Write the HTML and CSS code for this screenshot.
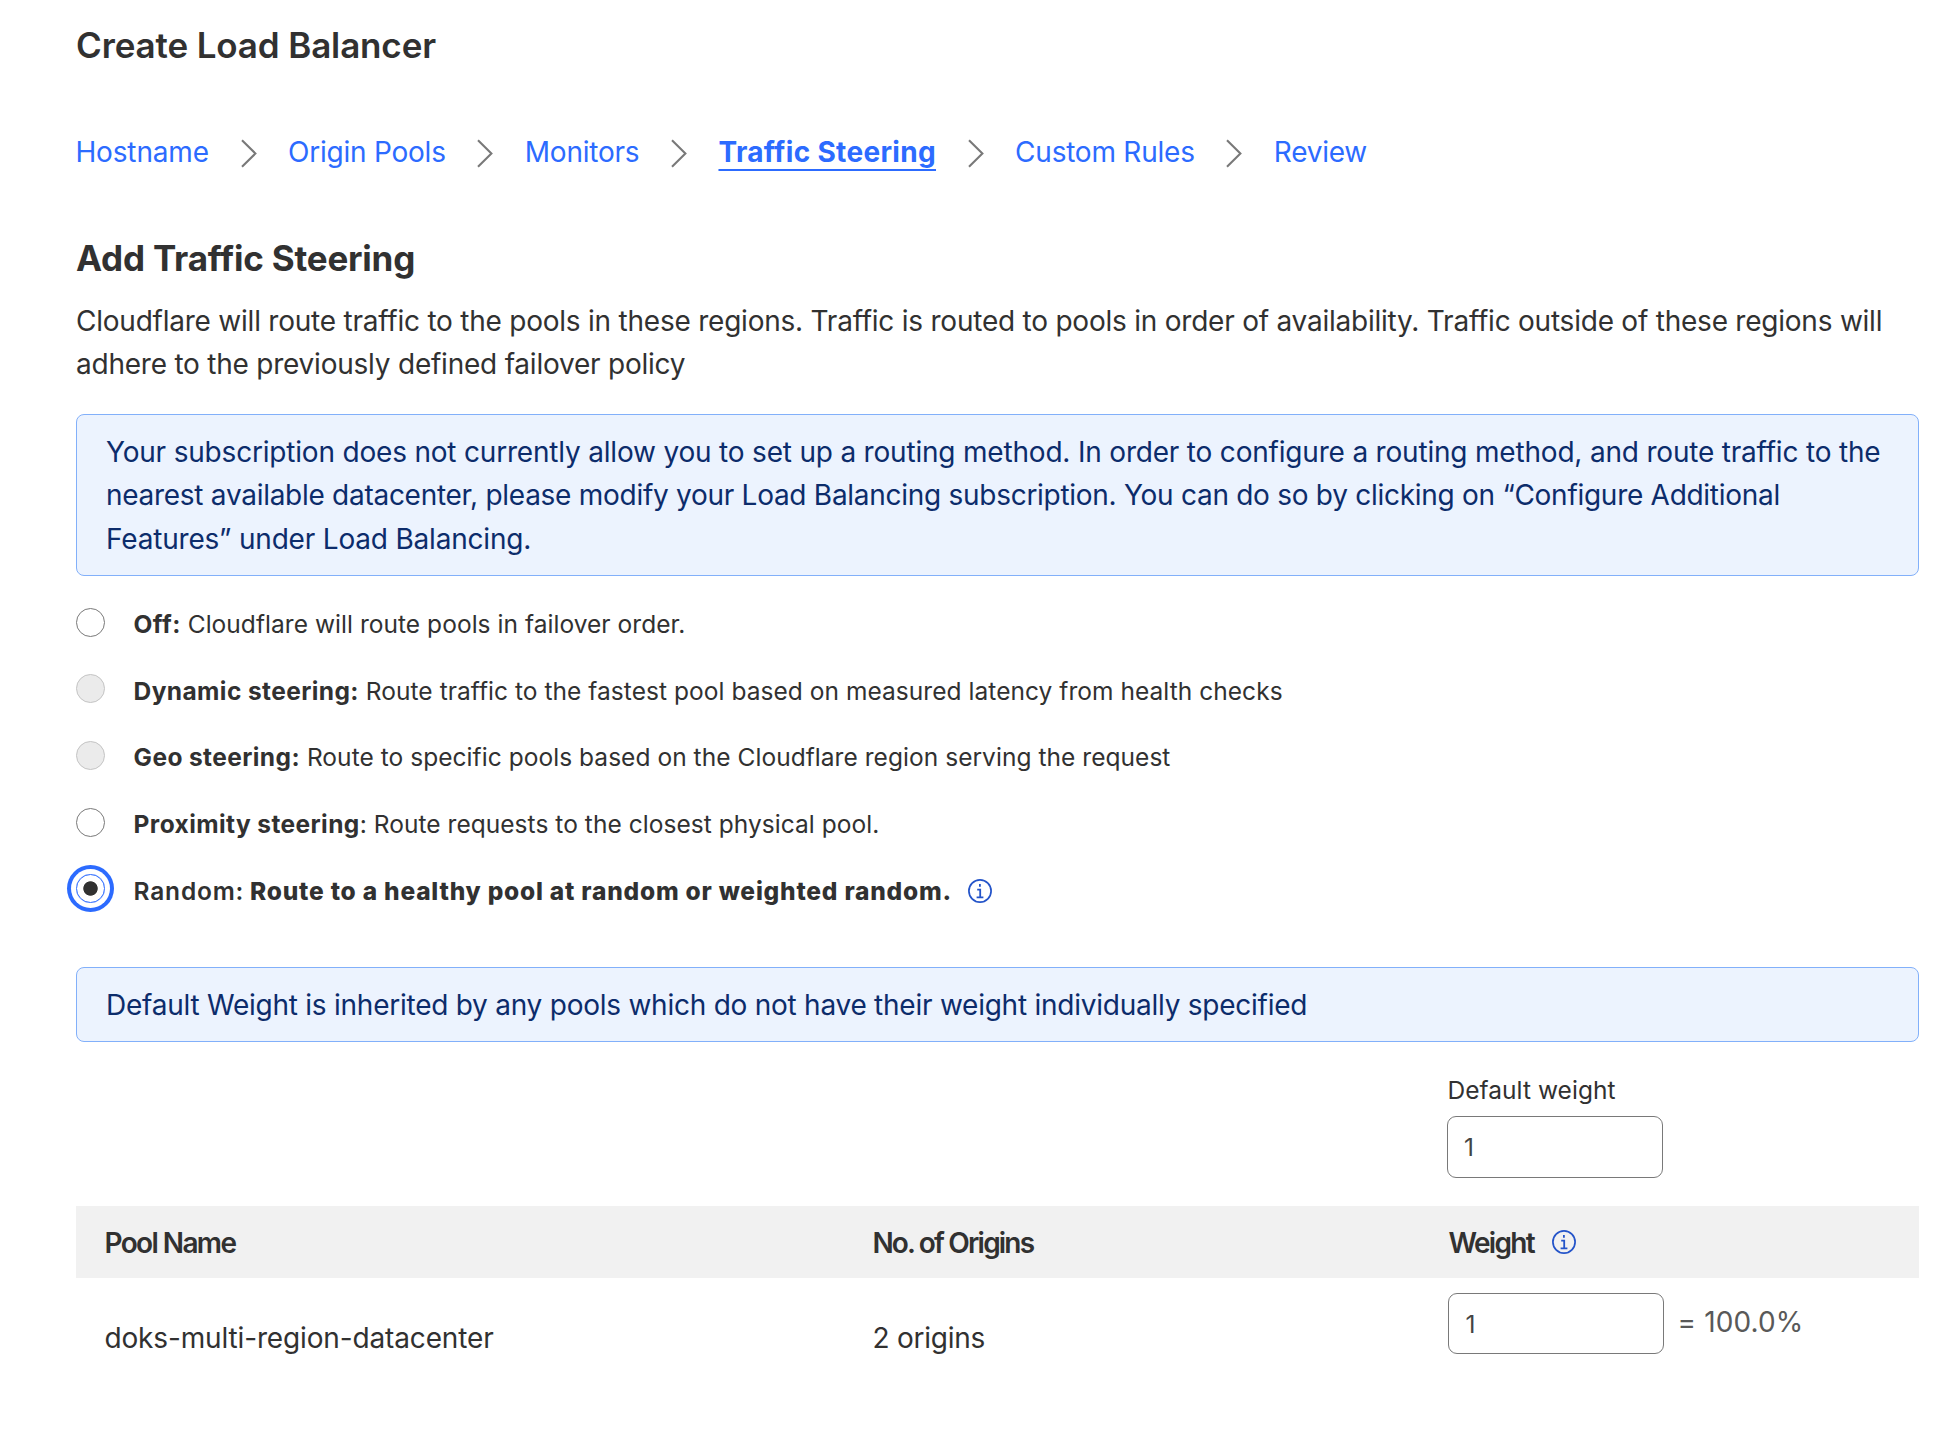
FILE: index.html
```html
<!DOCTYPE html>
<html lang="en">
<head>
<meta charset="utf-8">
<title>Create Load Balancer</title>
<link rel="stylesheet" href="styles.css">
</head>
<body>
<svg class="defs" width="0" height="0">
  <symbol id="chevron" viewBox="0 0 16 29"><path d="M1 1.2 14.4 14.5 1 27.8" fill="none" stroke="#797979" stroke-width="2.1"/></symbol>
  <symbol id="info" viewBox="0 0 24 24"><circle cx="12" cy="12" r="11.1" fill="none" stroke="#2454c9" stroke-width="1.7"/><path d="M11.9 5.1v2.6M9.2 10.6h3v7.6M8.6 18.3h6.8" fill="none" stroke="#2454c9" stroke-width="1.8"/></symbol>
</svg>
<main class="page">
  <h1 class="title">Create Load Balancer</h1>
  <nav class="steps">
    <a class="step">Hostname</a>
    <svg class="chevron"><use href="#chevron"/></svg>
    <a class="step">Origin Pools</a>
    <svg class="chevron"><use href="#chevron"/></svg>
    <a class="step">Monitors</a>
    <svg class="chevron"><use href="#chevron"/></svg>
    <a class="step step-current">Traffic Steering</a>
    <svg class="chevron"><use href="#chevron"/></svg>
    <a class="step">Custom Rules</a>
    <svg class="chevron"><use href="#chevron"/></svg>
    <a class="step">Review</a>
  </nav>
  <h2 class="heading">Add Traffic Steering</h2>
  <p class="intro">Cloudflare will route traffic to the pools in these regions. Traffic is routed to pools in order of availability. Traffic outside of these regions will<br>adhere to the previously defined failover policy</p>
  <div class="alert">
    <span class="line">Your subscription does not currently allow you to set up a routing method. In order to configure a routing method, and route traffic to the</span>
    <span class="line line-tight">nearest available datacenter, please modify your Load Balancing subscription. You can do so by clicking on “Configure Additional</span>
    <span class="line">Features” under Load Balancing.</span>
  </div>
  <div class="options">
    <label class="option"><span class="radio"></span><span><b>Off:</b> Cloudflare will route pools in failover order.</span></label>
    <label class="option"><span class="radio radio-disabled"></span><span><b>Dynamic steering:</b> Route traffic to the fastest pool based on measured latency from health checks</span></label>
    <label class="option"><span class="radio radio-disabled"></span><span><b>Geo steering:</b> Route to specific pools based on the Cloudflare region serving the request</span></label>
    <label class="option"><span class="radio"></span><span><b>Proximity steering</b>: Route requests to the closest physical pool.</span></label>
    <label class="option"><span class="radio radio-checked"></span><span class="chosen"><span class="chosen-name">Random:</span> <strong>Route to a healthy pool at random or weighted random.</strong></span><svg class="info"><use href="#info"/></svg></label>
  </div>
  <div class="alert alert-weight"><span class="line">Default Weight is inherited by any pools which do not have their weight individually specified</span></div>
  <div class="field">
    <label class="field-label" for="default-weight">Default weight</label>
    <input class="input" id="default-weight" type="text" value="1">
  </div>
  <div class="table">
    <div class="row row-head">
      <div class="cell head-pool">Pool Name</div>
      <div class="cell head-origins">No. of Origins</div>
      <div class="cell cell-weight"><span class="head-weight">Weight</span><svg class="info"><use href="#info"/></svg></div>
    </div>
    <div class="row row-body">
      <div class="cell pool-name">doks-multi-region-datacenter</div>
      <div class="cell origins">2 origins</div>
      <div class="cell cell-input"><input class="input" type="text" value="1" aria-label="Weight"><span class="percent">= 100.0%</span></div>
    </div>
  </div>
</main>
</body>
</html>
```
FILE: styles.css
```css
* { box-sizing: border-box; }
body {
  margin: 0;
  background: #fff;
  color: #313131;
  font: 400 28px/43.2px Inter, "Liberation Sans", sans-serif;
  letter-spacing: -0.228px;
}
.defs { display: block; }
.page { padding: 23px 15px 0 76px; }
.title, .heading { margin: 0; font-size: 35px; line-height: 44px; }
.title { font-weight: 600; letter-spacing: -0.132px; }
.heading { margin-top: 62px; font-weight: 700; letter-spacing: -0.208px; }

.steps { display: flex; align-items: center; gap: 31.7px; height: 43px; margin: 64px 0 0 -0.6px; }
.step { color: #2c6bff; white-space: nowrap; }
.step:first-child { letter-spacing: -0.14px; }
.step-current {
  font-weight: 700;
  letter-spacing: 0.32px;
  text-decoration: underline 2px;
  text-underline-offset: 7px;
  text-decoration-skip-ink: none;
}
.chevron { flex: none; width: 16px; height: 29px; margin: 1px -0.3px 0 0; }

.intro { margin: 20px 0 27.6px; white-space: nowrap; }

.alert {
  padding: 16px 29px 13.6px;
  border: 1px solid #82b0fa;
  border-radius: 8px;
  background: #ecf3fe;
  color: #0c2c6b;
}
.line { display: block; white-space: nowrap; line-height: 43.4px; letter-spacing: -0.193px; }
.line-tight { letter-spacing: -0.278px; }
.alert-weight { margin-top: 58.6px; padding-bottom: 13.8px; }
.alert-weight .line { letter-spacing: -0.245px; }

.options { display: flex; flex-direction: column; gap: 30.6px; margin-top: 30.4px; font-size: 24.5px; line-height: 36px; letter-spacing: 0.045px; }
.option { display: flex; align-items: flex-start; height: 36px; white-space: nowrap; }
.option b { font-weight: 700; letter-spacing: 0.4px; }
.radio { flex: none; width: 29px; height: 29px; margin: 1.8px 28.6px 0 0; border: 1px solid #797979; border-radius: 50%; background: #fff; }
.radio-disabled { margin-top: 1.4px; border-color: #c4c4c4; background: #ebebeb; }
.radio-checked {
  border-color: #2c6bff;
  background: radial-gradient(circle, #313131 6.8px, #fff 7.6px);
  box-shadow: 0 0 0 5px #fff, 0 0 0 9px #2c6bff;
}
.chosen-name { font-weight: 600; letter-spacing: 0.8px; }
.chosen strong { margin-left: -1.1px; font-weight: 800; letter-spacing: 0.79px; }
.info { flex: none; width: 24px; height: 24px; }
.option .info { margin: 6px 0 0 16px; }

.field { display: flex; flex-direction: column; gap: 8px; width: 216px; margin: 30px 0 28px 1371px; }
.field-label { font-size: 24.5px; line-height: 36px; letter-spacing: 0.044px; text-indent: 0.5px; }
.input {
  width: 216px;
  height: 62px;
  padding: 0 16px;
  border: 1px solid #797979;
  border-radius: 9px;
  background: #fff;
  color: #444;
  font: 400 24.5px/36px Inter, "Liberation Sans", sans-serif;
}

.row { display: grid; grid-template-columns: 768px 576px 1fr; }
.row-head { align-items: center; height: 72px; background: #f1f1f1; font-weight: 600; }
.cell { padding-left: 28.4px; padding-top: 3px; white-space: nowrap; }
.head-pool { letter-spacing: -1.6px; }
.head-origins { letter-spacing: -1.82px; }
.cell-weight { display: flex; align-items: center; gap: 18.4px; }
.head-weight { letter-spacing: -1.65px; }
.cell-weight .info { margin-bottom: 3px; }
.row-body { align-items: start; }
.pool-name, .origins { padding-top: 39px; }
.pool-name { letter-spacing: -0.14px; }
.cell-input { display: flex; align-items: center; gap: 13.2px; padding-top: 15px; }
.cell-input .input { height: 61px; }
.percent { padding-bottom: 2px; color: #595959; letter-spacing: 0.1px; }
```
